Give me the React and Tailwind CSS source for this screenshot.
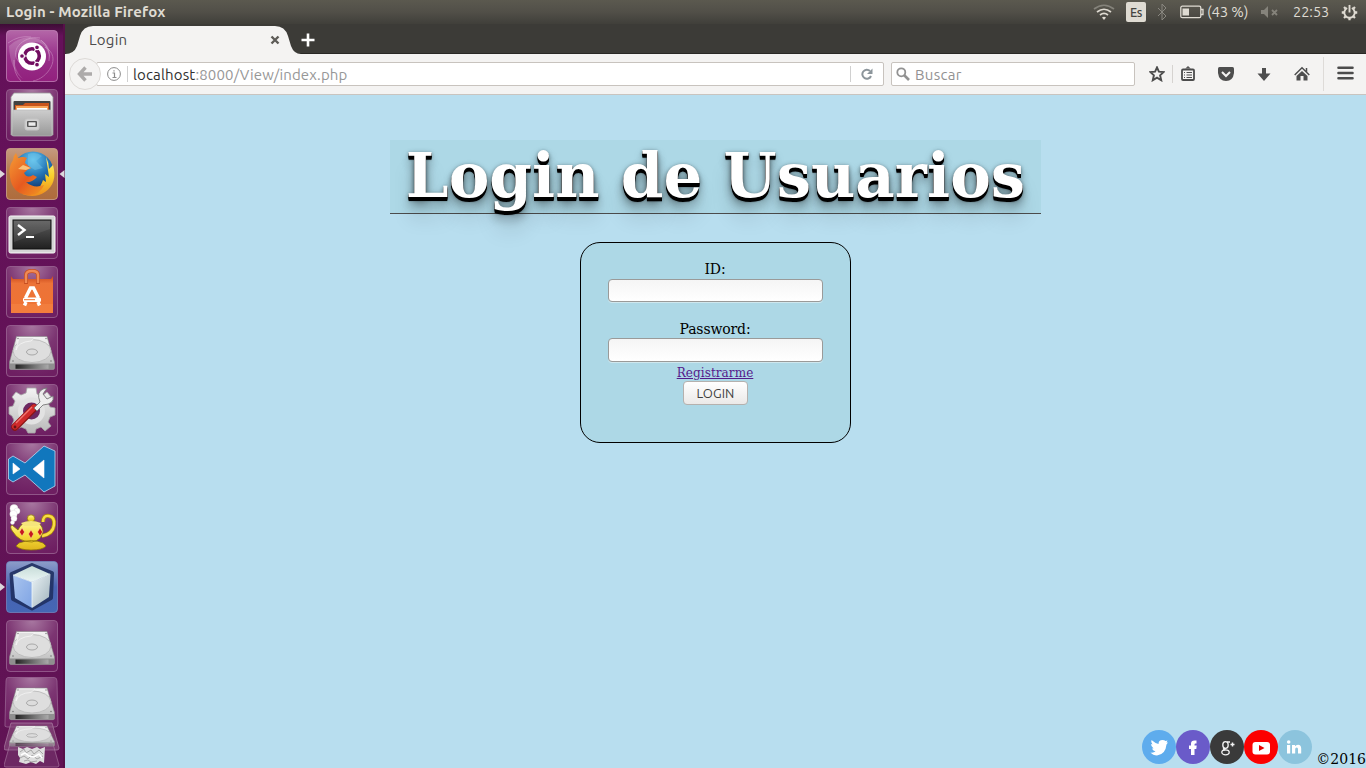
import React from "react";

function Defs() {
  return (
    <svg className="absolute h-0 w-0" aria-hidden="true">
      <defs>
        <radialGradient id="tile" cx=".5" cy="0" r="1">
          <stop offset="0" stopColor="#a878a1" />
          <stop offset=".5" stopColor="#7c3572" />
          <stop offset="1" stopColor="#6e1f62" />
        </radialGradient>
        <linearGradient id="metal" x1="0" y1="0" x2="0" y2="1">
          <stop offset="0" stopColor="#f4f4f4" />
          <stop offset="1" stopColor="#b9b9b9" />
        </linearGradient>
        <linearGradient id="cabinet" x1="0" y1="0" x2="0" y2="1">
          <stop offset="0" stopColor="#cdcdcd" />
          <stop offset="1" stopColor="#989898" />
        </linearGradient>
        <linearGradient id="metalDark" x1="0" y1="0" x2="1" y2="0">
          <stop offset="0" stopColor="#222" />
          <stop offset=".6" stopColor="#777" />
          <stop offset="1" stopColor="#aaa" />
        </linearGradient>
        <linearGradient id="dash" x1="0" y1="0" x2="0" y2="1">
          <stop offset="0" stopColor="#b467a8" />
          <stop offset=".5" stopColor="#98308a" />
          <stop offset="1" stopColor="#92207d" />
        </linearGradient>
        <linearGradient id="copper" x1="0" y1="0" x2="0" y2="1">
          <stop offset="0" stopColor="#c59a80" />
          <stop offset=".5" stopColor="#b57848" />
          <stop offset="1" stopColor="#ae6c3d" />
        </linearGradient>
        <radialGradient id="globe" cx=".5" cy=".2" r=".8">
          <stop offset="0" stopColor="#65c6f0" />
          <stop offset=".5" stopColor="#2374b5" />
          <stop offset="1" stopColor="#10295c" />
        </radialGradient>
        <linearGradient id="fox" x1="0" y1="0" x2="1" y2="1">
          <stop offset="0" stopColor="#f59d35" />
          <stop offset=".55" stopColor="#e65a20" />
          <stop offset="1" stopColor="#f29a22" />
        </linearGradient>
        <linearGradient id="tail" x1="0" y1="0" x2="0" y2="1">
          <stop offset="0" stopColor="#fff27a" />
          <stop offset=".5" stopColor="#f8cf2a" />
          <stop offset="1" stopColor="#ef8b1e" />
        </linearGradient>
        <linearGradient id="screen" x1="0" y1="0" x2="0" y2="1">
          <stop offset="0" stopColor="#5d5d5d" />
          <stop offset="1" stopColor="#202020" />
        </linearGradient>
        <linearGradient id="bag" x1="0" y1="0" x2="0" y2="1">
          <stop offset="0" stopColor="#c9481b" />
          <stop offset=".2" stopColor="#ec7338" />
          <stop offset="1" stopColor="#ef7333" />
        </linearGradient>
        <linearGradient id="blueTile" x1="0" y1="0" x2="0" y2="1">
          <stop offset="0" stopColor="#8d9dc8" />
          <stop offset=".5" stopColor="#4763b2" />
          <stop offset="1" stopColor="#4567b5" />
        </linearGradient>
        <linearGradient id="cubeTop" x1="0" y1="0" x2="0" y2="1">
          <stop offset="0" stopColor="#c7dcd8" />
          <stop offset="1" stopColor="#eaf5f4" />
        </linearGradient>
        <linearGradient id="cubeLeft" x1="0" y1="0" x2="1" y2="1">
          <stop offset="0" stopColor="#a9c4ee" />
          <stop offset="1" stopColor="#7fa4e4" />
        </linearGradient>
        <linearGradient id="cubeRight" x1="0" y1="0" x2="1" y2="1">
          <stop offset="0" stopColor="#eaf2f5" />
          <stop offset="1" stopColor="#9fb2bb" />
        </linearGradient>
        <linearGradient id="gold" x1="0" y1="0" x2="0" y2="1">
          <stop offset="0" stopColor="#fff7a0" />
          <stop offset=".5" stopColor="#f6dd3c" />
          <stop offset="1" stopColor="#dfb51c" />
        </linearGradient>
      </defs>
    </svg>
  );
}

function Tile({ fill = "url(#tile)", stroke = "#9d6a97", running, focused, children }) {
  return (
    <div className="relative h-[52px] w-[65px] shrink-0 pl-[6px]">
      <svg viewBox="0 0 52 52" className="block h-[52px] w-[52px]">
        <rect x=".5" y=".5" width="51" height="51" rx="3.500" fill={fill} stroke={stroke} strokeOpacity=".75" />
        {children}
      </svg>
      {running && (
        <svg viewBox="0 0 5 8" className="absolute left-0 top-[22px] h-2 w-[5px]">
          <path d="M0 0L5 4L0 8Z" fill="#dcd7db" />
        </svg>
      )}
      {focused && (
        <svg viewBox="0 0 5 8" className="absolute right-0 top-[22px] h-2 w-[6px]">
          <path d="M5 0L0 4L5 8Z" fill="#dcd7db" />
        </svg>
      )}
    </div>
  );
}

function DriveArt() {
  return (
    <g>
      <path d="M10.500 11.500H41L48.500 37V43Q48.500 44.500 47 44.500H5Q3.500 44.500 3.500 43V37Z" fill="url(#metal)" stroke="#868686" strokeWidth=".6" />
      <path d="M4 38.500H48V43.300Q48 44.300 47 44.300H5Q4 44.300 4 43.300Z" fill="#8f8f8f" />
      <rect x="9.500" y="39.500" width="33" height="4.300" fill="url(#metalDark)" />
      <ellipse cx="26" cy="26" rx="19" ry="11.500" fill="#dedede" stroke="#b5b5b5" strokeWidth=".8" />
      <path d="M10 25Q12 17 25 16L29 12.500H13Z" fill="#dedede" stroke="#f8f8f8" strokeWidth=".7" />
      <ellipse cx="26" cy="27" rx="5.500" ry="3" fill="#dcdcdc" stroke="#a2a2a2" strokeWidth=".9" />
      <g fill="#777">
        <circle cx="12" cy="13.500" r=".7" /><circle cx="40" cy="13.500" r=".7" />
        <circle cx="7" cy="36" r=".8" /><circle cx="45" cy="36" r=".8" />
      </g>
    </g>
  );
}

function Launcher() {
  return (
    <aside className="flex w-[65px] shrink-0 flex-col gap-[7px] overflow-hidden bg-gradient-to-b from-[#3e0c36] via-[#65115a] via-[12px] to-[#601354] pt-[6px] shadow-[inset_-2px_0_0_#571049]">
      <Tile fill="url(#dash)" stroke="#c586bb">
        <g fill="none" stroke="#e3b8dc" strokeWidth="1" opacity=".4">
          <path d="M16 35C0 22 17 5 34 8M39 17C57 27 41 49 27 51M35 10Q45 18 43 31" />
          <path d="M2 13Q13 5 25 7M15 51Q7 43 8 30" />
        </g>
        <path d="M3 16Q15 5 30 8Q46 13 44 30Q40 6 21 14Q9 19 9 35Q11 43 17 49Q4 40 3 16Z" fill="#fff" opacity=".18" />
        <circle cx="26" cy="26.500" r="14" fill="#fff" />
        <circle cx="26" cy="26" r="7.300" fill="none" stroke="#720d60" strokeWidth="3.600" />
        <g stroke="#fff" strokeWidth="1.100">
          <path d="M15 26H21M31 17L28 22M31 35L28 30" />
          <circle cx="16" cy="26" r="2.400" fill="#720d60" />
          <circle cx="31" cy="17.300" r="2.400" fill="#720d60" />
          <circle cx="31" cy="34.700" r="2.400" fill="#720d60" />
        </g>
      </Tile>
      <Tile>
        <path d="M8 4H44L47 8V46H5V8Z" fill="url(#metal)" stroke="#9b9b9b" strokeWidth=".8" />
        <rect x="7.500" y="12" width="37" height="11" rx="1" fill="#424242" />
        <path d="M9 16H17L19 14H43V21H9Z" fill="#c9541c" /><path d="M10 17H42V21H10Z" fill="#f8a55a" /><path d="M11 19H41V21H11Z" fill="#fff" />
        <path d="M7 21H45L46 46Q46 47 44 47H8Q6 47 6 46Z" fill="url(#cabinet)" stroke="#b8b8b8" strokeWidth=".7" />
        <rect x="19" y="30" width="14" height="11" rx="2" fill="#d2d2d2" stroke="#c4c4c4" />
        <rect x="21" y="32" width="10" height="6" rx="1" fill="#555" /><rect x="22.500" y="33.300" width="7" height="3.500" fill="#ececec" />
      </Tile>
      <Tile fill="url(#copper)" stroke="#d2ae8c" running focused>
        <circle cx="27" cy="24" r="20.500" fill="url(#globe)" />
        <path d="M22 6Q30 3 36 8L30 13L37 20L29 22L22 18Z" fill="#74c8ea" opacity=".45" />
        <path d="M40 9Q43 15 43 21L47 17Q52 35 39 44Q29 51 16 46Q33 46 37 32L40 34L39 26L43 29Z" fill="url(#tail)" />
        <path d="M7 12Q7 8 10 5L12 10Q17 8 21 10Q19 12 19 15L25 20Q20 22 18 25Q21 31 27 27L31 29Q26 35 20 34Q28 41 38 37Q34 48 21 47Q6 45 4 29Q2 19 7 12Z" fill="url(#fox)" />
        <path d="M17 17L25 20L20 22L12 21Z" fill="#f8c279" />
      </Tile>
      <Tile>
        <rect x="3" y="9" width="46" height="37" rx="1.500" fill="#d5d5d5" stroke="#f8f8f8" />
        <rect x="7" y="13" width="38" height="29" fill="url(#screen)" stroke="#111" />
        <path d="M8 14H44V22L8 35Z" fill="#fff" opacity=".08" />
        <path d="M12 18L18.500 23L12 28" fill="none" stroke="#fff" strokeWidth="2.400" />
        <path d="M20 30H28" stroke="#fff" strokeWidth="2" />
      </Tile>
      <Tile>
        <path d="M5 10L7 13H45L47 10V47H5Z" fill="url(#bag)" />
        <path d="M5 38H47V47H5Z" fill="#f58345" opacity=".6" />
        <path d="M20 18V9Q20 5 26 5Q32 5 32 9V18" fill="none" stroke="#c64e21" strokeWidth="3.800" />
        <path d="M20 17V9Q20 5 26 5Q32 5 32 9V17" fill="none" stroke="#f08a55" strokeWidth="2.400" />
        <path d="M19.500 32L24.500 22H27.500L32.500 32M20 36L18.500 39.500M32 36L33.500 39.500" fill="none" stroke="#fff" strokeWidth="3.400" />
        <rect x="17" y="31.500" width="18" height="4.500" rx="1.500" fill="#fff" /><path d="M18 33.700H29" stroke="#ef7333" />
      </Tile>
      <Tile><DriveArt /></Tile>
      <Tile>
        <path d="M21 4H30L31 10L36 12L41 8L46 14L42 19L44 23L49 24V31L44 33L42 38L45 42L39 47L35 43L30 45L29 49H22L20 45L15 43L10 46L6 41L8 36L6 32L3 30V23L7 22L9 17L6 13L10 8L15 11L20 9Z" fill="url(#metal)" stroke="#a7a7a7" strokeWidth=".8" />
        <circle cx="25.500" cy="27" r="10" fill="#6d2861" />
        <circle cx="25.500" cy="27" r="11" fill="none" stroke="#e2e2e2" strokeWidth="5" />
        <path d="M9 43L28 24" stroke="#881515" strokeWidth="7.500" strokeLinecap="round" />
        <path d="M9 42.500L28 23.500" stroke="#cf2a2a" strokeWidth="6" strokeLinecap="round" />
        <path d="M10 39L26 23" stroke="#ef7771" strokeWidth="1.200" />
        <path d="M28 24L34 18Q30 8 37 5L41 4L37 10L41 15L47 12Q49 20 37 21L31 27Z" fill="#eee" stroke="#777" strokeWidth=".9" />
        <circle cx="9" cy="43" r="1.400" fill="#681313" />
      </Tile>
      <Tile>
        <path fillRule="evenodd" d="M38 3L49 8V43L38 49L19 32L7 39L2.500 36V16L7 13L19 20ZM38 17L27 26L38 35ZM7 20V31L14 26Z" fill="#1177bd" stroke="#b9dcf2" strokeWidth=".8" />
        <path d="M38 17L27 26L38 35ZM7 20V31L14 26Z" fill="#fff" />
      </Tile>
      <Tile>
        <g fill="#fff" stroke="#d6d6d6" strokeWidth=".4"><circle cx="8" cy="6.500" r="4" /><circle cx="11" cy="9" r="3" /><circle cx="7.500" cy="12" r="3.700" /><circle cx="8" cy="16.500" r="3" /><circle cx="6.500" cy="20.500" r="2" /></g>
        <path d="M37 20Q37 13 43 14Q49 15 48 23Q47 32 36 34" fill="none" stroke="#b18c08" strokeWidth="4" />
        <path d="M37 20Q37 13 43 14Q49 15 48 23Q47 32 36 34" fill="none" stroke="#f7dc46" strokeWidth="2.400" />
        <path d="M13 41Q26 36 37 41L40 44Q37 48 25 48Q14 48 10 44ZM6 23L12 28Q15 20 26 19Q36 20 37 29Q36 38 26 40Q13 40 7 30Q3 25 6 23Z" fill="url(#gold)" stroke="#8e7508" strokeWidth=".8" />
        <circle cx="25" cy="16.500" r="3.700" fill="url(#gold)" stroke="#8e7508" strokeWidth=".8" />
        <path d="M15 21Q25 17 35 21L32 24H18Z" fill="#f5e57c" />
        <path d="M16 26L18.500 30L16 34L13.500 30ZM25 28L27.500 32L25 36.500L22.500 32ZM34 26L36.500 30L34 34L31.500 30Z" fill="#c6181d" stroke="#fff2b3" strokeWidth=".4" />
      </Tile>
      <Tile fill="url(#blueTile)" stroke="#7288c2" running>
        <path d="M26 4L46 12L45 37L26 47.500L7 38L5.500 13Z" fill="#182858" stroke="#203061" strokeWidth="4" strokeLinejoin="round" opacity=".9" />
        <path d="M26 5L44 13L26 21L7 14Z" fill="url(#cubeTop)" />
        <path d="M7 14L26 21V47L9 37Z" fill="url(#cubeLeft)" />
        <path d="M26 21L44.500 13L43 36L26 47Z" fill="url(#cubeRight)" />
        <path d="M7 14L26 21L44 13M26 21V46" fill="none" stroke="#eef7fb" strokeWidth="1" opacity=".8" />
      </Tile>
      <Tile><DriveArt /></Tile>
      <div className="-mt-[2px] flex h-[91px] flex-col pl-1">
        <svg viewBox="0 0 58 91" className="h-[91px] w-[58px]">
          <path d="M4 .5H50Q53 .5 53 4L54 47Q54 50 51 50H3Q0 50 1 47L2 4Q2 .5 4 .5Z" fill="url(#tile)" stroke="#9d6a97" strokeOpacity=".7" />
          <g transform="translate(2 0) scale(1 .96)"><DriveArt /></g>
          <path d="M7 46H48L55 71Q55 73 53 73H2Q0 73 0 71Z" fill="#8a5080" fillOpacity=".65" stroke="#ad81a5" strokeOpacity=".7" />
          <g transform="translate(2 42) scale(1 .61)"><DriveArt /></g>
          <path d="M6 67H49L55 88Q55 90 53 90H2Q0 90 0 88Z" fill="#875080" fillOpacity=".35" stroke="#ad81a5" strokeOpacity=".6" />
          <path d="M14 70L19 72L23 70L28 72L33 70L36 72L41 70L40 86L36 84L32 87L27 85L22 87L15 85L16 81L14 78Z" fill="#dedede" />
          <path d="M16 75L20 72L22 76L27 73L30 77L35 73L39 77M16 81L20 79L24 82L28 78L33 82L39 79M20 84L24 83L27 85L33 84" fill="none" stroke="#a5a5a5" strokeWidth="1" />
          <path d="M17 78L21 76L25 79L30 80L35 77L38 81" fill="none" stroke="#fff" strokeWidth="1.500" />
        </svg>
      </div>
    </aside>
  );
}

function SystemBar() {
  return (
    <header className="flex h-6 shrink-0 items-center bg-gradient-to-b from-[#5b594f] via-[#514f48] to-[#403f3a] font-['Ubuntu','Noto_Sans',sans-serif] text-[#dfdbd2]">
      <div className="w-[400px] whitespace-nowrap pl-[6px] text-[15px] font-bold leading-6 tracking-[0.15px]">Login - Mozilla Firefox</div>
      <div className="ml-auto flex h-6 w-[273px] items-center">
        <svg viewBox="0 0 22 20" className="h-5 w-[22px]" fill="none" strokeWidth="1.700">
          <path d="M1 7Q11-.5 21 7" stroke="#85837b" /><path d="M4 10Q11 4.500 18 10M7 13Q11 9.800 15 13" stroke="#dfdbd2" /><path d="M9 15.500L11 18L13 15.500Q11 14 9 15.500" fill="#dfdbd2" stroke="none" />
        </svg>
        <div className="ml-[11px] h-5 w-5 rounded-[2px] bg-[#dfdbd2] text-center text-[12.5px] font-medium leading-[21px] tracking-[-0.3px] text-[#45443f]">Es</div>
        <svg viewBox="0 0 10 18" className="ml-[11px] h-[18px] w-[10px]" fill="none" stroke="#898780"><path d="M1 5L9 13L5 17V1L9 5L1 13" /></svg>
        <svg viewBox="0 0 24 14" className="ml-[13px] h-[14px] w-6" fill="none" stroke="#dfdbd2" strokeWidth="1.300"><rect x=".8" y="1.200" width="20" height="11.500" rx="1.500" /><path d="M21 4.500H23V9.500H21" /><rect x="2.500" y="3.500" width="6.500" height="7" fill="#dfdbd2" stroke="none" /></svg>
        <div className="ml-[3px] w-[43px] whitespace-nowrap text-[15px] leading-6 tracking-[-0.2px]">(43 %)</div>
        <svg viewBox="0 0 18 14" className="ml-[11px] h-[14px] w-[18px]" fill="#85837b"><path d="M0 5H3L7 1V13L3 9H0Z" /><path d="M11 5L16 10M16 5L11 10" stroke="#85837b" strokeWidth="1.800" /></svg>
        <div className="ml-[14px] w-[38px] whitespace-nowrap text-[14.5px] leading-6">22:53</div>
        <svg viewBox="0 0 18 18" className="ml-[10px] h-[17px] w-[17px]" fill="none" stroke="#dfdbd2"><path d="M6.500 4.200A5.500 5.500 0 1 0 11.500 4.200" strokeWidth="2" /><path d="M9 1V9" strokeWidth="2" /><path d="M3.200 3.200L5 5M14.800 3.200L13 5M.8 9H3.500M14.500 9H17.200M3.200 14.800L5 13M14.800 14.800L13 13M9 14.500V17.200" strokeWidth="2.400" /></svg>
      </div>
    </header>
  );
}

function TabStrip() {
  return (
    <div className="flex h-[30px] shrink-0 border-b border-[#292825] bg-[#3c3b37]">
      <div className="relative h-[30px] w-[236px]">
        <svg viewBox="0 0 236 28" className="absolute left-0 top-[2px] h-7 w-[236px]"><path d="M0 28Q9 28 12 20L15 10Q18 0 28 0H210Q220 0 223 10L226 20Q229 28 236 28Z" fill="#f4f3f2" /></svg>
        <div className="relative flex h-[30px] items-center pl-6 pt-[2px]">
          <span className="w-[180px] font-['Ubuntu','Noto_Sans',sans-serif] text-[15px] leading-[26px] tracking-[0.2px] text-[#4c4c4c]">Login</span>
          <svg viewBox="0 0 10 10" className="ml-[1px] h-[10px] w-[10px]"><path d="M1.500 1.500L8.500 8.500M8.500 1.500L1.500 8.500" stroke="#5d5b57" strokeWidth="2.400" /></svg>
        </div>
      </div>
      <svg viewBox="0 0 14 14" className="mt-[9px] h-[14px] w-[14px]"><path d="M7 .5V13.500M.5 7H13.500" stroke="#fff" strokeWidth="2.600" /></svg>
    </div>
  );
}

function Toolbar() {
  return (
    <div className="flex h-[41px] shrink-0 items-center border-b border-[#c9c4bf] bg-[#f4f3f2] font-['Ubuntu','Noto_Sans',sans-serif]">
      <div className="relative z-10 ml-1 flex h-8 w-8 shrink-0 items-center justify-center rounded-full border border-[#dddad7] bg-[#f4f3f2]">
        <svg viewBox="0 0 16 16" className="h-4 w-4" fill="none" stroke="#adabaa" strokeWidth="3.400"><path d="M8.500 1.500L2.500 8L8.500 14.500M3 8H15" /></svg>
      </div>
      <div className="-ml-[5px] flex h-6 w-[788px] shrink-0 items-center rounded-[2px] border border-[#c8c3be] bg-white">
        <svg viewBox="0 0 14 14" className="ml-[10px] h-[14px] w-[14px]" fill="none" stroke="#8b8b8b"><circle cx="7" cy="7" r="6.400" /><path d="M5.500 6H7.500V10.500M5.500 10.500H9.500M7 3.200V4.600" strokeWidth="1.200" /></svg>
        <div className="ml-[6px] h-4 w-px bg-[#d0d0d0]" />
        <div className="ml-[5px] w-[717px] whitespace-nowrap pt-px text-[15px] leading-[22px] tracking-[0.15px] text-[#979797]"><span className="text-[#303030]">localhost</span>:8000/View/index.php</div>
        <div className="h-4 w-px bg-[#d0d0d0]" />
        <svg viewBox="0 0 12 12" className="ml-[10px] h-3 w-3" fill="none" stroke="#8c959b" strokeWidth="2"><path d="M10 8A4.500 4.500 0 1 1 9 3" /><path d="M6 6H11.500V.5Z" fill="#8c959b" stroke="none" /></svg>
      </div>
      <div className="ml-[7px] flex h-6 w-[244px] shrink-0 items-center rounded-[2px] border border-[#c8c3be] bg-white">
        <svg viewBox="0 0 14 14" className="ml-1 h-[14px] w-[14px]" fill="none" stroke="#929292"><circle cx="5.300" cy="5.300" r="4" strokeWidth="1.800" /><path d="M8 8L13 13" strokeWidth="2.600" /></svg>
        <span className="ml-[5px] pt-px text-[15px] leading-[22px] tracking-[0.3px] text-[#929292]">Buscar</span>
      </div>
      <div className="ml-[14px] flex flex-1 items-center">
        <svg viewBox="0 0 16 16" className="h-4 w-4" fill="none" stroke="#4c4c4c" strokeWidth="1.900"><path d="M8 1.400L9.900 5.700L14.600 6.100L11.100 9.300L12.200 14.200L8 11.600L3.800 14.200L4.900 9.300L1.400 6.100L6.100 5.700Z" /></svg>
        <div className="ml-[7px] h-[18px] w-px bg-[#d6d3d0]" />
        <svg viewBox="0 0 14 15" className="ml-2 h-[15px] w-[14px] -translate-y-px" fill="none" stroke="#4c4c4c"><path d="M5 2.500L7 .5L9 2.500" fill="#4c4c4c" /><rect x="1" y="3.500" width="12" height="10.500" rx="1" strokeWidth="1.800" /><path d="M3 6.500H4M5.500 6.500H11M3 9H4M5.500 9H11M3 11.500H4M5.500 11.500H11" strokeWidth="1.200" /></svg>
        <svg viewBox="0 0 16 14" className="ml-[23px] h-[14px] w-4"><path d="M1.500 0H14.500Q16 0 16 1.500V6Q15 14 8 14Q1 14 0 6V1.500Q0 0 1.500 0Z" fill="#4e4e4e" /><path d="M4 5L8 9L12 5" fill="none" stroke="#f4f3f2" strokeWidth="2" /></svg>
        <svg viewBox="0 0 14 15" className="ml-[23px] h-[15px] w-[14px]" fill="#4e4e4e"><path d="M5 1H9V6.500H13.500L7 14L.5 6.500H5Z" /></svg>
        <svg viewBox="0 0 16 15" className="ml-[23px] h-[15px] w-4 -translate-y-px" fill="#4e4e4e"><path d="M8 5L13.500 10V14.500H9.500V10H6.500V14.500H2.500V10Z" /><path d="M.7 9L8 1.700L15.300 9M12.500 2V6" fill="none" stroke="#4e4e4e" strokeWidth="1.500" /></svg>
        <div className="ml-[13px] h-[34px] w-px bg-[#dedbd8]" />
        <svg viewBox="0 0 17 14" className="ml-[13px] h-[14px] w-[17px] -translate-y-px" stroke="#4c4c4c" strokeWidth="2.600" strokeLinecap="round"><path d="M1.500 1.700H15.500M1.500 7H15.500M1.500 12.300H15.500" /></svg>
      </div>
    </div>
  );
}

function Social({ color, children }) {
  return <svg viewBox="0 0 34 34" className="h-[34px] w-[34px]"><circle cx="17" cy="17" r="17" fill={color} />{children}</svg>;
}

function LoginPage() {
  return (
    <main className="flex flex-1 flex-col items-center bg-[#b8deef] font-['DejaVu_Serif',serif] text-black">
      <h1 className="mt-[45px] h-[74px] w-[651px] shrink-0 whitespace-nowrap border-b border-[#4c4c4c] bg-[#add8e6] text-center text-[61px] font-bold leading-[71px] text-white [text-shadow:0_1px_0_#000,0_2px_0_#000,0_3px_0_#000,0_4px_0_#000,0_5px_1px_rgba(0,0,0,.1),0_0_5px_rgba(0,0,0,.1),0_1px_3px_rgba(0,0,0,.3),0_3px_5px_rgba(0,0,0,.2),0_5px_10px_rgba(0,0,0,.25),0_10px_10px_rgba(0,0,0,.2),0_20px_20px_rgba(0,0,0,.15)]">Login de Usuarios</h1>
      <form className="mt-[28px] flex h-[201px] w-[271px] shrink-0 flex-col items-center rounded-[20px] border border-black bg-[#add8e6] pr-px pt-[17px] text-[14px] leading-[18px]">
        <label htmlFor="user-id" className="tracking-[-0.1px]">ID:</label>
        <input id="user-id" className="mt-px h-[23px] w-[215px] rounded-[4px] border border-[#9a9a99] bg-gradient-to-b from-[#f5f5f5] to-white shadow-[0_1px_0_#cfe7ee]" />
        <label htmlFor="password" className="mt-[18px] tracking-[-0.15px]">Password:</label>
        <input id="password" type="password" className="h-6 w-[215px] rounded-[4px] border border-[#9a9a99] bg-gradient-to-b from-[#f5f5f5] to-white shadow-[0_1px_0_#cfe7ee]" />
        <a href="#" className="mt-[3px] text-[12px] leading-[16px] tracking-[0.08px] text-[#551a8b] underline">Registrarme</a>
        <button type="button" className="ml-px h-6 w-[65px] rounded-[4px] border border-[#b5b1ae] bg-gradient-to-b from-white to-[#ebe9e8] font-['Ubuntu','Noto_Sans',sans-serif] text-[13px] leading-[22px] tracking-[0.1px] text-[#3f3f3f]">LOGIN</button>
      </form>
      <footer className="mt-auto flex h-[38px] w-full items-start justify-end">
        <Social color="#5eaced"><path d="M9 21Q12 21.500 14 20Q11 19 10.500 17H12Q9.500 15 9.500 12.500L11 13Q9 10.500 10 8.500Q14 12 17 12.500Q17 8.500 21 8.500Q23 8.500 24 9.500L26 9L25 11L26.500 11L25 13Q24 23 15.500 24Q11.500 24 9 21Z" transform="translate(-.5 1.500)" fill="#fff" /></Social>
        <Social color="#6a5bc9"><path d="M15 25V19H13V15.500H15V13.500Q15 10.500 18.500 10.500H20.500V13.500H19.500Q18.500 13.500 18.500 14.700V15.500H20.700L20.300 19H18.500V25Z" fill="#fff" /></Social>
        <Social color="#3a3a3a"><g fill="none" stroke="#f3f3f3" strokeWidth="1.300"><ellipse cx="15.500" cy="15" rx="2.700" ry="3.300" /><ellipse cx="15.500" cy="22.300" rx="3.700" ry="2.500" /><path d="M17 12H20M15 18.300Q11.500 19 15.500 20" /><path d="M22.500 12.500V16.500M20.500 14.500H24.500" strokeWidth="1.500" /></g></Social>
        <Social color="#fc0000"><rect x="8.500" y="12" width="17.500" height="12.500" rx="3" fill="#fff" /><path d="M15 15L20.500 18L15 21Z" fill="#e60000" /></Social>
        <Social color="#8cc4dd"><g fill="#fff"><circle cx="10.700" cy="12" r="1.800" /><path d="M9 15H12.200V23.500H9ZM14 15H17V16.200Q18 14.700 20 14.700Q23.200 14.700 23.200 18.500V23.500H20V19Q20 17.400 18.700 17.400Q17.200 17.400 17.200 19V23.500H14Z" /></g></Social>
        <span className="ml-[4px] mt-[20px] whitespace-nowrap text-[14px] leading-[18px]">©2016</span>
      </footer>
    </main>
  );
}

export default function App() {
  return (
    <div className="flex h-[768px] w-[1366px] flex-col overflow-hidden">
      <Defs />
      <SystemBar />
      <div className="flex h-[744px]">
        <Launcher />
        <div className="flex w-[1301px] flex-col">
          <TabStrip />
          <Toolbar />
          <LoginPage />
        </div>
      </div>
    </div>
  );
}
